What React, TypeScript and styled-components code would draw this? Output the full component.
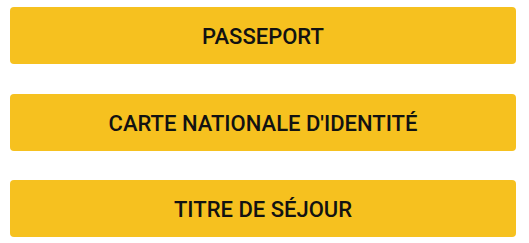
import styled, { createGlobalStyle } from "styled-components";

const GlobalStyle = createGlobalStyle`
  html, body {
    margin: 0;
    padding: 0;
    background: #ffffff;
  }
`;

const Wrapper = styled.div`
  display: flex;
  flex-direction: column;
  gap: 29.5px;
  padding: 7px 13px 0 10px;
`;

const DocButton = styled.button`
  display: flex;
  align-items: center;
  justify-content: center;
  height: 57px;
  width: 100%;
  border: none;
  border-radius: 4px;
  background: #f6c11f;
  color: #121212;
  font-family: Roboto, "Liberation Sans", sans-serif;
  font-weight: 500;
  font-size: 22px;
  text-transform: uppercase;
  cursor: pointer;
  padding: 2px 0 0;
`;

const documents = ["Passeport", "Carte nationale d'identité", "Titre de séjour"];

const App = () => {
  return (
    <>
      <GlobalStyle />
      <Wrapper>
        {documents.map((doc) => (
          <DocButton key={doc}>{doc}</DocButton>
        ))}
      </Wrapper>
    </>
  );
};

export default App;
